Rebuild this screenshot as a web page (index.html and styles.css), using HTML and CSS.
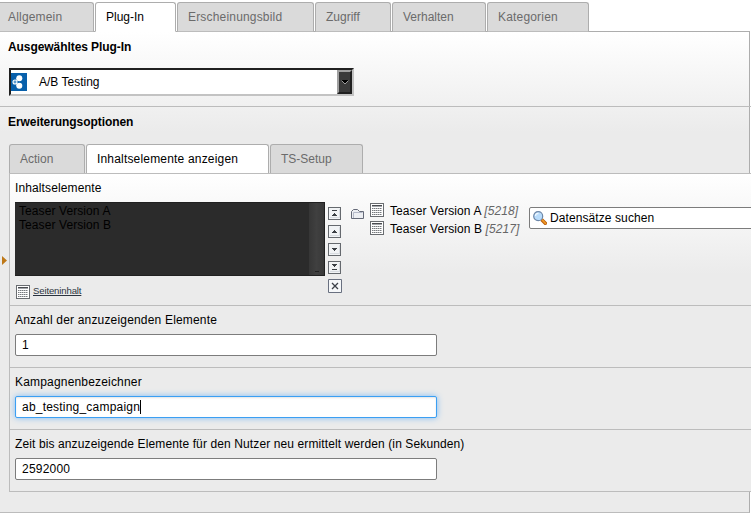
FILE: index.html
```html
<!DOCTYPE html>
<html lang="de">
<head>
<meta charset="utf-8">
<title>Plug-In</title>
<link rel="stylesheet" href="styles.css">
</head>
<body>
<svg class="defs" aria-hidden="true">
  <symbol id="record" viewBox="0 0 14 14">
    <path fill="#696c70" d="M0 0h14v14H0z"/>
    <path fill="#fff" d="M1 1h12v12H1z"/>
    <path fill="#4a4c50" d="M2 2h10v1H2z"/>
    <path fill="#a4a7ab" d="M2 3h10v1H2z"/>
    <path stroke="#777a7e" stroke-dasharray="1.5 .5" d="M2 5.5h10M2 7.5h10M2 9.5h10M2 11.5h10"/>
  </symbol>
  <symbol id="frame" viewBox="0 0 13 13">
    <path fill="#65696e" d="M0 0h13v13H0z"/>
    <path fill="#f1f3f5" d="M1 1h11v11H1z"/>
    <path fill="#d8dce1" d="M2 11h10V2h-1v8H2z"/>
  </symbol>
</svg>
<main class="page">
  <nav class="tabs outer-tabs">
    <a class="tab t-general wide">Allgemein</a>
    <a class="tab t-plugin active">Plug-In</a>
    <a class="tab t-look wide">Erscheinungsbild</a>
    <a class="tab t-access">Zugriff</a>
    <a class="tab t-behave">Verhalten</a>
    <a class="tab t-cat wide">Kategorien</a>
  </nav>
  <section class="panel">
    <div class="plugin-row">
      <h2>Ausgewähltes Plug-In</h2>
      <div class="select">
        <svg class="logo" width="16" height="18" viewBox="0 0 16 18"><path fill="#0860ab" d="M0 0h16v18H0z"/><g fill="#fff"><path d="M5 6l3-3 3 3-3 2zM5 12l3 3 3-3-3-2z"/><circle cx="8.300" cy="5.200" r="3"/><circle cx="8.300" cy="12.800" r="3"/></g><circle cx="4" cy="9" r="2" fill="#5d9bcf" stroke="#fff" stroke-width="1.100"/></svg>
        <span class="value">A/B Testing</span>
        <span class="drop"><svg width="8" height="5" viewBox="0 0 8 5"><path fill="#000" d="M0 0h8L4 4z"/><path fill="none" stroke="#bbb" stroke-width=".8" d="M.5.5L4 4 7.500.5"/></svg></span>
      </div>
    </div>
    <div class="options">
      <h2>Erweiterungsoptionen</h2>
      <nav class="tabs inner-tabs">
        <a class="tab t-action">Action</a>
        <a class="tab t-show active wide">Inhaltselemente anzeigen</a>
        <a class="tab t-setup">TS-Setup</a>
      </nav>
      <div class="flex-form">
        <svg class="marker" width="5" height="9" viewBox="0 0 5 9"><path fill="#be7818" d="M0 0l5 4.500L0 9z"/></svg>
        <div class="field elements">
          <label>Inhaltselemente</label>
          <div class="group">
            <div class="list-column">
              <div class="listbox">
                <div>Teaser Version A</div>
                <div>Teaser Version B</div>
                <span class="scrollbar"></span>
              </div>
              <div class="browse"><svg width="14" height="14"><use href="#record"/></svg><a>Seiteninhalt</a></div>
            </div>
            <div class="movers">
              <svg width="13" height="13" viewBox="0 0 13 13"><use href="#frame"/><path fill="#3b3f44" d="M4 3h5v1H4zM6 6h1v1h1v1h1v1H4V8h1V7h1z"/></svg>
              <svg width="13" height="13" viewBox="0 0 13 13"><use href="#frame"/><path fill="#3b3f44" d="M6 5h1v1h1v1h1v1H4V7h1V6h1z"/></svg>
              <svg width="13" height="13" viewBox="0 0 13 13"><use href="#frame"/><path fill="#3b3f44" d="M4 5h5v1H8v1H7v1H6V7H5V6H4z"/></svg>
              <svg width="13" height="13" viewBox="0 0 13 13"><use href="#frame"/><path fill="#3b3f44" d="M4 3h5v1H8v1H7v1H6V5H5V4H4zM4 8h5v1H4z"/></svg>
              <svg width="14" height="14" viewBox="0 0 14 14"><path fill="#f5f7f9" stroke="#697080" d="M.5.5h13v13H.5z"/><path stroke="#3b4048" stroke-width="1.300" d="M4 4l6 6M10 4l-6 6"/></svg>
            </div>
            <svg class="folder" width="13" height="11" viewBox="0 0 13 11"><path fill="#eceef2" stroke="#656a78" d="M.5 10.500v-7l2-2h4l2 2h4v7z"/><path fill="none" stroke="#b4b9c8" d="M2.500 10v-5.500h9"/></svg>
            <ul class="records">
              <li><svg width="14" height="14"><use href="#record"/></svg><span>Teaser Version A <em>[5218]</em></span></li>
              <li><svg width="14" height="14"><use href="#record"/></svg><span>Teaser Version B <em>[5217]</em></span></li>
            </ul>
            <div class="search">
              <svg width="14" height="14" viewBox="0 0 14 14"><path stroke="#b65a0c" stroke-width="3.400" d="M8.500 8.500l5 5"/><path stroke="#f29a24" stroke-width="1.700" d="M9 8.700l4 4.300"/><circle cx="5.200" cy="5.200" r="4.500" fill="#b9dcfb" stroke="#6d87a8" stroke-width="1.200"/><path fill="none" stroke="#edf7ff" stroke-width="1.400" d="M2.500 5c0-2 1.500-2.700 3-2.500"/></svg>
              <span>Datensätze suchen</span>
            </div>
          </div>
        </div>
        <div class="field">
          <label class="wide">Anzahl der anzuzeigenden Elemente</label>
          <div class="input">1</div>
        </div>
        <div class="field">
          <label class="wide">Kampagnenbezeichner</label>
          <div class="input focused">ab_testing_campaign<i class="caret"></i></div>
        </div>
        <div class="field">
          <label>Zeit bis anzuzeigende Elemente für den Nutzer neu ermittelt werden (in Sekunden)</label>
          <div class="input">2592000</div>
        </div>
      </div>
    </div>
  </section>
</main>
</body>
</html>
```
FILE: styles.css
```css
* { box-sizing: border-box; }
body {
  margin: 0;
  background: #fff;
  color: #000;
  font: 12px/14px "Liberation Sans", Arial, sans-serif;
  overflow: hidden;
}
svg { display: block; flex: none; }
.defs { position: absolute; width: 0; height: 0; }
.page { width: 751px; height: 513px; padding-top: 2px; }
.tabs { display: flex; gap: 1px; height: 30px; margin-bottom: -1px; position: relative; }
.tab {
  height: 30px;
  padding: 7px 0 0 10px;
  border: 1px solid #adadad;
  border-bottom-color: #bcbcbc;
  border-radius: 3px 3px 0 0;
  background: #dadada;
  color: #6b6b6b;
  white-space: nowrap;
}
.tab.active { background: #fff; color: #000; border-bottom-color: #fff; }
.t-general { width: 94px; padding-left: 8px; border-left: 0; border-top-left-radius: 0; }
.t-plugin { width: 81px; }
.t-look { width: 137px; }
.t-access { width: 76px; }
.t-behave { width: 94px; }
.t-cat { width: 102px; }
.t-action { width: 76px; }
.t-show { width: 183px; }
.t-setup { width: 93px; }

.panel {
  width: 750px;
  height: 482px;
  border: solid #adadad;
  border-width: 1px 1px 1px 0;
  border-bottom-color: #bcbcbc;
  background: linear-gradient(#fff, #ebebeb 100px);
}
h2 { margin: 0; font-size: 12px; line-height: 14px; letter-spacing: -0.07px; }
.plugin-row { width: 751px; height: 75px; padding: 8px 0 0 8px; border-bottom: 1px solid #bcbcbc; }
.select {
  display: flex;
  align-items: center;
  width: 345px;
  height: 28px;
  margin: 14px 0 0 1px;
  border: 2px solid;
  border-color: #202020 #c3c3c3 #c3c3c3 #202020;
  background: #fff;
}
.value { margin-left: 12px; }
.drop {
  display: flex;
  align-items: center;
  justify-content: center;
  width: 15px;
  height: 24px;
  margin-left: auto;
  border: 2px solid;
  border-color: #a0a0a0 #202020 #202020 #a0a0a0;
  background: #3a3a3a;
}
.options { padding: 8px 0 0 9px; }
.options h2 { margin-left: -1px; }
.inner-tabs { margin-top: 15px; }
.flex-form {
  position: relative;
  width: 742px;
  border: solid #bcbcbc;
  border-width: 1px 0 0 1px;
  background: linear-gradient(#fff, #ebebeb 100px);
}
.marker { position: absolute; left: -8px; top: 82px; }
.field { height: 62px; padding: 7px 0 0 5px; border-bottom: 1px solid #bcbcbc; }
.field label { display: block; height: 21px; letter-spacing: 0.115px; }
.tab.wide, .field label.wide { letter-spacing: 0.18px; }
.field.elements { height: 132px; }
.group { display: flex; align-items: flex-start; letter-spacing: 0.09px; }
.listbox {
  position: relative;
  width: 310px;
  height: 74px;
  padding: 1px 4px;
  border: solid #202020;
  border-width: 1px 1px 1px 0;
  background: #2b2b2b;
}
.scrollbar { position: absolute; right: 0; top: 0; width: 15px; height: 72px; background: linear-gradient(90deg, #363636, #404040 50%, #383838); }
.scrollbar::after { content: ""; position: absolute; right: 5px; bottom: 3px; width: 4px; height: 1px; background: #202020; }
.browse { display: flex; gap: 3px; margin: 9px 0 0 1px; font-size: 9.6px; line-height: 12px; letter-spacing: -0.15px; }
.browse a { color: #2b3440; text-decoration: underline; }
.movers { display: grid; gap: 5px; margin: 5px 0 0 3px; }
.folder { margin: 6px 0 0 9px; }
.records { display: grid; gap: 4px; width: 153px; margin: 1px 0 0 6px; padding: 0; list-style: none; }
.records li { display: flex; gap: 6px; height: 14px; white-space: nowrap; }
.records span { padding-top: 1px; }
.records em { color: #666; }
.search {
  display: flex;
  flex: none;
  align-items: center;
  gap: 3px;
  width: 240px;
  height: 22px;
  margin: 5px 0 0 6px;
  padding-left: 3px;
  border: 1px solid #7c7c7c;
  border-radius: 2px;
  background: #fff;
  white-space: nowrap;
}
.records, .list-column, .movers { flex: none; }
.input {
  display: flex;
  align-items: center;
  width: 422px;
  height: 22px;
  padding-left: 6px;
  border: 1px solid #7c7c7c;
  border-radius: 2px;
  background: #fff;
  letter-spacing: 0.21px;
}
.focused { border-color: #3b9ff3; box-shadow: 0 0 6px #7ebcf5, inset 0 1px 2px #e4e4e4; }
.caret { width: 1px; height: 14px; background: #000; }
```
